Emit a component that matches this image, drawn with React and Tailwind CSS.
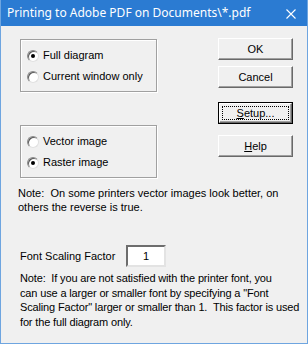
import React from 'react';

const font = { fontFamily: '"Liberation Sans", Arial, sans-serif' };

const Radio = ({ checked, label }) => (
    <div className="flex items-center h-[21px]">
        <span className="relative w-[12px] h-[12px] rounded-full bg-white border border-t-[#8a8a8a] border-l-[#8a8a8a] border-b-[#e0e0e0] border-r-[#e0e0e0] shadow-[inset_1px_1px_0_#5a5a5a]">
            {checked && <span className="absolute left-[3px] top-[3px] w-[4px] h-[4px] rounded-full bg-black" />}
        </span>
        <span className="ml-[4px] text-[11px] text-black">{label}</span>
    </div>
);

const Btn = ({ children, focused, className = '' }) => (
    <div className={`w-[75px] h-[22px] ${focused ? 'border border-black' : ''} ${className}`}>
        <div className="relative w-full h-full flex items-center justify-center bg-[#f0f0f0] border-t border-l border-t-white border-l-white border-b border-r border-b-[#696969] border-r-[#696969] shadow-[inset_-1px_-1px_0_#a0a0a0] text-[11px] text-black">
            {focused && <span className="absolute inset-[2px] border border-dotted border-black" />}
            <span className="relative">{children}</span>
        </div>
    </div>
);

export default function App() {
    return (
        <div style={font} className="w-[308px] h-[344px] flex flex-col bg-[#f0f0f0] border-x border-b border-[#6ea5e0] overflow-hidden">
            <div className="h-[26px] -mx-px flex items-center justify-between bg-[#2b7bd2] pl-[7px] pr-[12px]">
                <span className="text-white text-[12px]" style={{ fontFamily: '"Noto Sans", "Open Sans", sans-serif' }}>
                    Printing to Adobe PDF on Documents\*.pdf
                </span>
                <svg width="10" height="10" viewBox="0 0 10 10" className="mt-[1px]">
                    <path d="M0.5 0.5 L9.5 9.5 M9.5 0.5 L0.5 9.5" stroke="white" strokeWidth="1.1" fill="none" />
                </svg>
            </div>

            <div className="flex pt-[12px]">
                <div className="ml-[19px] mt-[1px] w-[137px] flex flex-col">
                    <div className="h-[53px] border border-[#a0a0a0] shadow-[1px_1px_0_#fff,inset_1px_1px_0_#fff] pl-[6px] pt-[5px]">
                        <Radio checked label="Full diagram" />
                        <Radio label="Current window only" />
                    </div>
                    <div className="h-[53px] mt-[33px] border border-[#a0a0a0] shadow-[1px_1px_0_#fff,inset_1px_1px_0_#fff] pl-[6px] pt-[5px]">
                        <Radio label="Vector image" />
                        <Radio checked label="Raster image" />
                    </div>
                </div>
                <div className="ml-auto mr-[14px] flex flex-col">
                    <Btn>OK</Btn>
                    <Btn className="mt-[6px]">Cancel</Btn>
                    <Btn focused className="mt-[14px]"><span className="underline">S</span>etup...</Btn>
                    <Btn className="mt-[11px]"><span className="underline">H</span>elp</Btn>
                </div>
            </div>

            <p className="mt-[8px] pl-[17px] text-[11px] leading-[14px] text-black whitespace-pre">
                {'Note:  On some printers vector images look better, on\nothers the reverse is true.'}
            </p>

            <div className="mt-[31px] pl-[19px] flex items-center h-[22px]">
                <span className="text-[11px] text-black w-[106px]">Font Scaling Factor</span>
                <div className="w-[40px] h-[22px] bg-white border-2 border-t-[#6d6d6d] border-l-[#6d6d6d] border-b-[#e3e3e3] border-r-[#e3e3e3] flex items-center justify-center text-[11px] text-black">
                    1
                </div>
            </div>

            <p className="mt-[4px] pl-[19px] text-[11px] leading-[14.5px] tracking-[-0.15px] text-black whitespace-pre">
                {'Note:  If you are not satisfied with the printer font, you\ncan use a larger or smaller font by specifying a "Font\nScaling Factor" larger or smaller than 1.  This factor is used\nfor the full diagram only.'}
            </p>
        </div>
    );
}
